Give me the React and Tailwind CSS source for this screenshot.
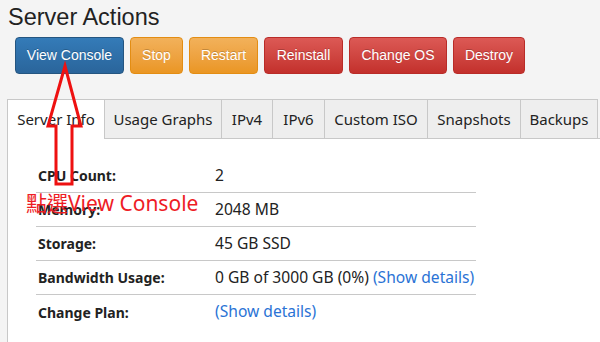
import React from "react";

const btn = "h-[37px] px-0 whitespace-nowrap rounded-[4px] border text-white text-[14px] flex items-center justify-center [text-shadow:0_-1px_0_rgba(0,0,0,0.2)]";

const tabs = ["Usage Graphs", "IPv4", "IPv6", "Custom ISO", "Snapshots", "Backups"];
const tabW = ["w-[117px]", "w-[51px]", "w-[52px]", "w-[103px]", "w-[93px]", "w-[77px]"];

const rows = [
  ["CPU Count:", "2"],
  ["Memory:", "2048 MB"],
  ["Storage:", "45 GB SSD"],
  ["Bandwidth Usage:", "bw"],
  ["Change Plan:", "plan"],
];

export default function App() {
  return (
    <div className="relative w-[600px] h-[342px] overflow-hidden bg-[#f4f4f4] font-['Liberation_Sans',Arial,sans-serif]">
      <h1 className="pl-[8px] pt-[4px] text-[23.5px] leading-[26px] text-[#222]">Server Actions</h1>
      <div className="flex gap-[6px] ml-[15px] mt-[7px]">
        <button className={`${btn} w-[109px] bg-linear-to-b from-[#347bb8] to-[#2a659b] border-[#245580]`}>View Console</button>
        <button className={`${btn} w-[53px] bg-linear-to-b from-[#f2b15a] to-[#ea9622] border-[#e38d13]`}>Stop</button>
        <button className={`${btn} w-[69px] bg-linear-to-b from-[#f2b15a] to-[#ea9622] border-[#e38d13]`}>Restart</button>
        <button className={`${btn} w-[79px] bg-linear-to-b from-[#dc5955] to-[#c3302c] border-[#b92c28]`}>Reinstall</button>
        <button className={`${btn} w-[98px] bg-linear-to-b from-[#dc5955] to-[#c3302c] border-[#b92c28]`}>Change OS</button>
        <button className={`${btn} w-[72px] bg-linear-to-b from-[#dc5955] to-[#c3302c] border-[#b92c28]`}>Destroy</button>
      </div>

      <div className="ml-[7px] mt-[25px] font-['Noto_Sans',sans-serif]">
        <div className="flex h-[40px] text-[15px] text-[#222]">
          <div className="w-[98px] shrink-0 bg-white border-l border-t border-r border-[#c8c8c8] flex items-center justify-center">Server Info</div>
          {tabs.map((t, i) => (
            <div key={t} className={`${tabW[i]} shrink-0 bg-[#eeeeee] border-t border-r border-b border-[#c8c8c8] flex items-center justify-center`}>{t}</div>
          ))}
          <div className="flex-1 border-b border-[#c8c8c8]"></div>
        </div>
        <div className="h-[210px] bg-white border-l border-[#c8c8c8] pt-[20px] pl-[28px]">
          <div className="w-[440px] text-[#222]">
            {rows.map(([k, v], i) => (
              <div key={k} className={`flex h-[34px] items-center ${i < 4 ? "border-b border-[#c8c8c8]" : ""}`}>
                <div className="w-[179px] pl-[2px] font-bold text-[14px]">{k}</div>
                <div className="text-[15.6px] whitespace-nowrap">
                  {v === "bw" ? (
                    <>0 GB of 3000 GB (0%) <span className="text-[#2a73d5]">(Show details)</span></>
                  ) : v === "plan" ? (
                    <span className="text-[#2a73d5]">(Show details)</span>
                  ) : v}
                </div>
              </div>
            ))}
          </div>
        </div>
      </div>

      <svg className="absolute left-0 top-0" width="600" height="342" viewBox="0 0 600 342">
        <polygon points="65,66 81,126 72,126 72,184 56,184 56,126 48,126" fill="none" stroke="#ee1111" strokeWidth="3" strokeLinejoin="miter" />
      </svg>
      <div className="absolute left-[26px] top-[190px] text-[21px] leading-[26px] text-[#ee1c25] font-['Noto_Sans','Noto_Sans_CJK_TC',sans-serif]">點選View Console</div>
    </div>
  );
}
